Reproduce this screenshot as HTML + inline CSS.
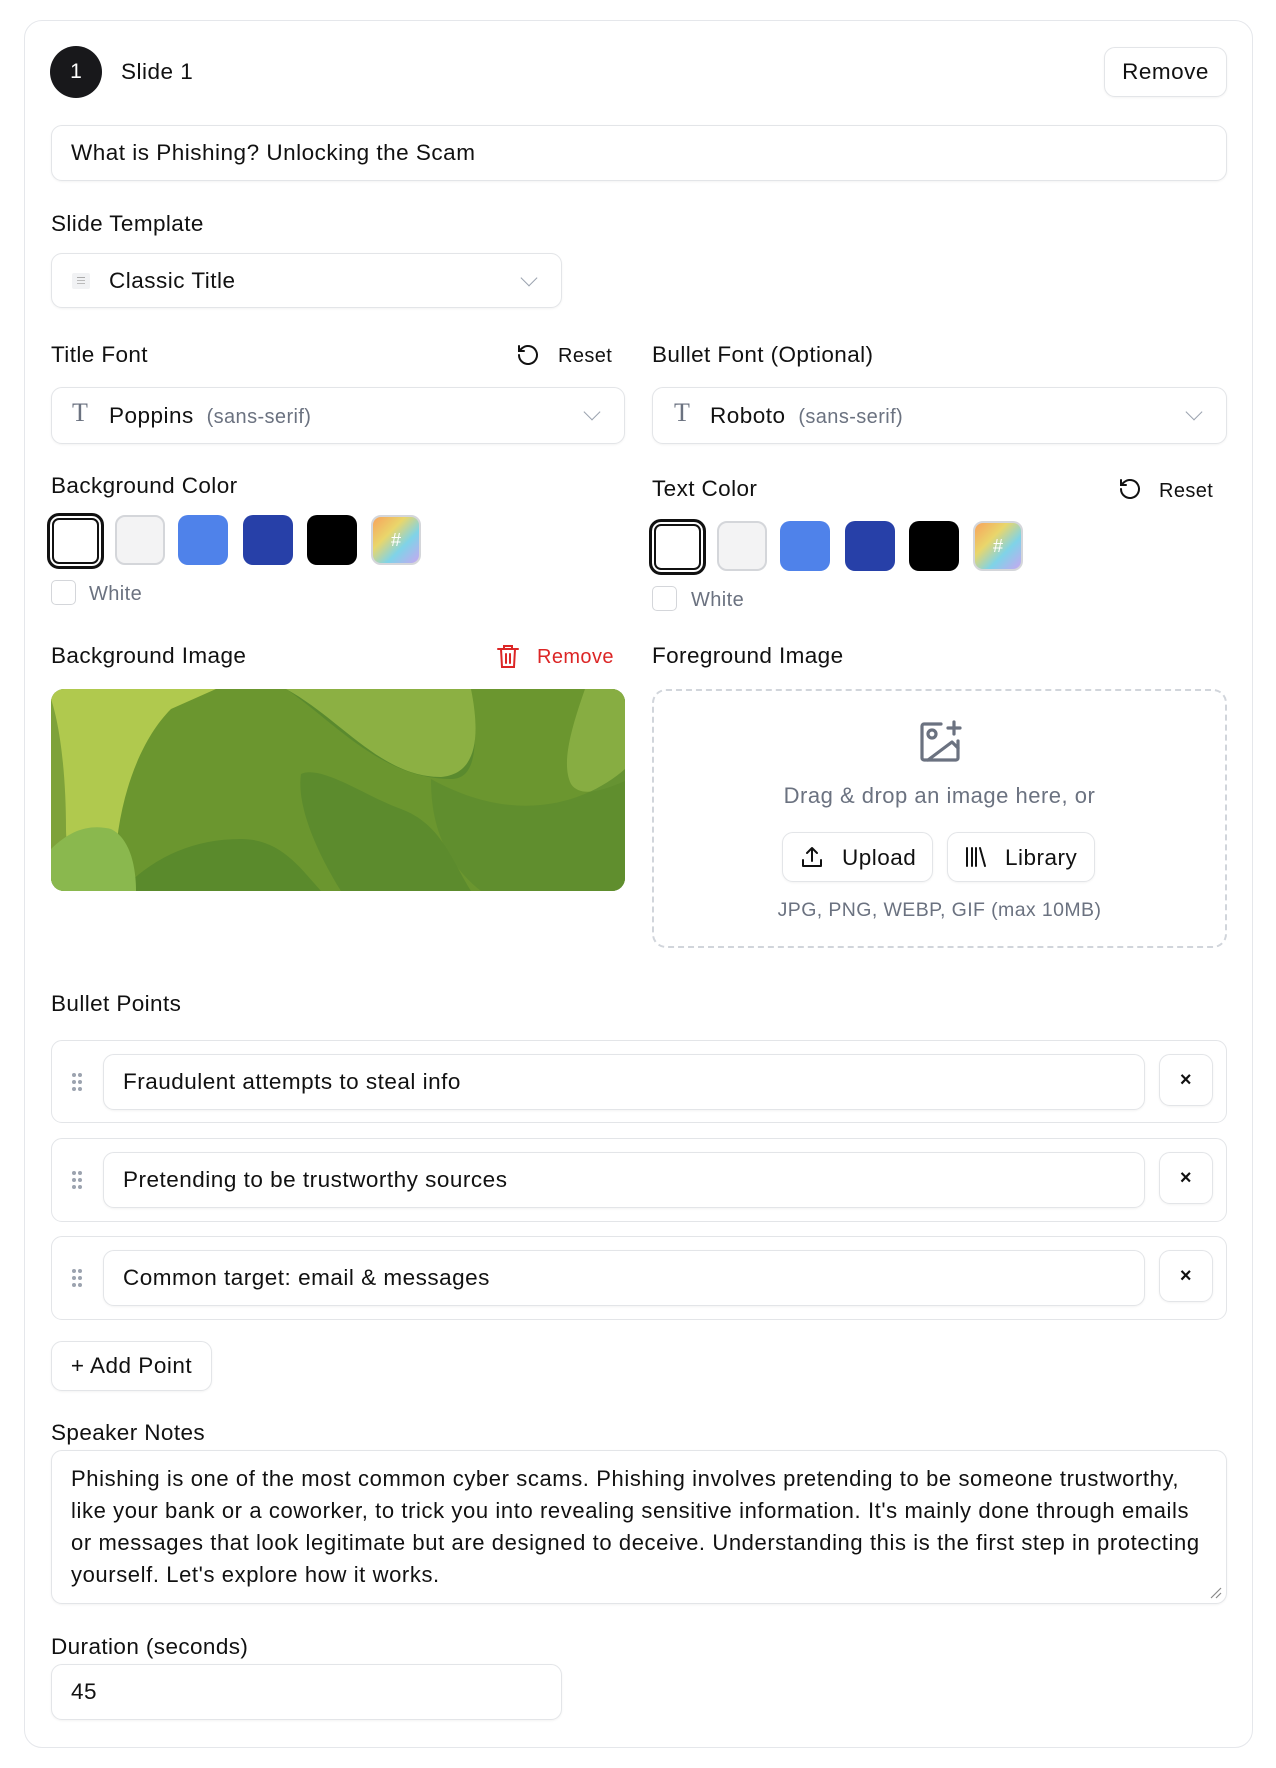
<!DOCTYPE html>
<html><head><meta charset="utf-8"><style>
*{box-sizing:border-box;margin:0;padding:0}
body{width:1276px;height:1768px;background:#fff;font-family:"Liberation Sans",sans-serif;color:#111;position:relative;overflow:hidden}
.a{position:absolute}
.card{left:24px;top:20px;width:1229px;height:1728px;border:1px solid #e5e7eb;border-radius:18px}
.box{position:absolute;border:1px solid #e3e5e8;border-radius:11px;background:#fff;box-shadow:0 1px 2px rgba(0,0,0,.05)}
.lbl{position:absolute;font-size:22.5px;line-height:24px;color:#111;letter-spacing:.4px;white-space:nowrap}
.t{position:absolute;font-size:22.5px;line-height:24px;white-space:nowrap;letter-spacing:.5px}
.s{font-size:20px;letter-spacing:.4px}
.sw{position:absolute;width:50px;height:50px;border-radius:10px}
.gray{color:#6b7280}
.chev{position:absolute;width:12px;height:12px;border-right:1.6px solid #9ca3af;border-bottom:1.6px solid #9ca3af;transform:rotate(45deg)}
.dots{position:absolute;width:10px;height:18px}
.dots i{position:absolute;width:4px;height:4px;border-radius:50%;background:#9ca3af}
</style></head><body>
<div class="a card"></div>

<div class="a" style="left:50px;top:46px;width:52px;height:52px;border-radius:50%;background:#18181b;color:#fff;font-size:21px;line-height:52px;text-align:center">1</div>
<div class="t" style="left:121px;top:60px">Slide 1</div>
<div class="box" style="left:1104px;top:47px;width:123px;height:50px"></div>
<div class="t" style="left:1104px;width:123px;text-align:center;top:60px">Remove</div>

<div class="box" style="left:51px;top:125px;width:1176px;height:56px"></div>
<div class="t" style="left:71px;top:141px">What is Phishing? Unlocking the Scam</div>

<div class="lbl" style="left:51px;top:212px">Slide Template</div>
<div class="box" style="left:51px;top:253px;width:511px;height:55px"></div>
<div class="a" style="left:72px;top:273px;width:18px;height:16px;background:#f1f2f4;border-radius:2px"></div>
<div class="a" style="left:77px;top:277px;width:8px;height:1px;background:#aaa;box-shadow:0 3px 0 #bbb,0 6px 0 #bbb"></div>
<div class="t" style="left:109px;top:269px">Classic Title</div>
<div class="chev" style="left:523px;top:272px"></div>

<div class="lbl" style="left:51px;top:343px">Title Font</div>
<svg class="a" style="left:516px;top:343px" width="24" height="24" viewBox="0 0 24 24" fill="none" stroke="#111" stroke-width="2" stroke-linecap="round"><path d="M3 12a9 9 0 1 0 3-6.7L3 8"/><path d="M3 3v5h5"/></svg>
<div class="t s" style="left:558px;top:344px">Reset</div>
<div class="lbl" style="left:652px;top:343px">Bullet Font (Optional)</div>

<div class="box" style="left:51px;top:387px;width:574px;height:57px"></div>
<div class="t" style="left:72px;top:401px;font-size:26px;color:#6b7280;font-family:'Liberation Serif',serif">T</div>
<div class="t" style="left:109px;top:404px">Poppins <span class="gray s" style="margin-left:6px">(sans-serif)</span></div>
<div class="chev" style="left:586px;top:406px"></div>
<div class="box" style="left:652px;top:387px;width:575px;height:57px"></div>
<div class="t" style="left:674px;top:401px;font-size:26px;color:#6b7280;font-family:'Liberation Serif',serif">T</div>
<div class="t" style="left:710px;top:404px">Roboto <span class="gray s" style="margin-left:6px">(sans-serif)</span></div>
<div class="chev" style="left:1188px;top:406px"></div>

<div class="lbl" style="left:51px;top:474px">Background Color</div>
<div class="sw" style="left:47px;top:513px;width:57px;height:56px;border:3px solid #111;box-shadow:inset 0 0 0 2px #fff,inset 0 0 0 4px #111;border-radius:12px;background:#fff"></div>
<div class="sw" style="left:115px;top:515px;background:#f3f3f4;border:2px solid #d4d6da"></div>
<div class="sw" style="left:178px;top:515px;background:#4f82ea"></div>
<div class="sw" style="left:243px;top:515px;background:#2740a8"></div>
<div class="sw" style="left:307px;top:515px;background:#000"></div>
<div class="sw" style="left:371px;top:515px;border:2px solid #d4d6da;background:linear-gradient(135deg,#f7a35c,#e9d66b 35%,#7fd3e8 65%,#c7a6f0);color:#fff;text-align:center;line-height:46px;font-size:18px">#</div>
<div class="a" style="left:51px;top:580px;width:25px;height:25px;border:1px solid #d4d6da;border-radius:5px"></div>
<div class="t gray s" style="left:89px;top:582px">White</div>

<div class="lbl" style="left:652px;top:477px">Text Color</div>
<svg class="a" style="left:1118px;top:477px" width="24" height="24" viewBox="0 0 24 24" fill="none" stroke="#111" stroke-width="2" stroke-linecap="round"><path d="M3 12a9 9 0 1 0 3-6.7L3 8"/><path d="M3 3v5h5"/></svg>
<div class="t s" style="left:1159px;top:479px">Reset</div>
<div class="sw" style="left:649px;top:519px;width:57px;height:56px;border:3px solid #111;box-shadow:inset 0 0 0 2px #fff,inset 0 0 0 4px #111;border-radius:12px;background:#fff"></div>
<div class="sw" style="left:717px;top:521px;background:#f3f3f4;border:2px solid #d4d6da"></div>
<div class="sw" style="left:780px;top:521px;background:#4f82ea"></div>
<div class="sw" style="left:845px;top:521px;background:#2740a8"></div>
<div class="sw" style="left:909px;top:521px;background:#000"></div>
<div class="sw" style="left:973px;top:521px;border:2px solid #d4d6da;background:linear-gradient(135deg,#f7a35c,#e9d66b 35%,#7fd3e8 65%,#c7a6f0);color:#fff;text-align:center;line-height:46px;font-size:18px">#</div>
<div class="a" style="left:652px;top:586px;width:25px;height:25px;border:1px solid #d4d6da;border-radius:5px"></div>
<div class="t gray s" style="left:691px;top:588px">White</div>

<div class="lbl" style="left:51px;top:644px">Background Image</div>
<svg class="a" style="left:496px;top:643px" width="24" height="26" viewBox="0 0 24 26" fill="none" stroke="#dc2626" stroke-width="2" stroke-linecap="round"><path d="M2 6h20M8 6V3h8v3M5 6l1 18h12l1-18M10 11v9M14 11v9"/></svg>
<div class="t s" style="left:537px;top:645px;color:#dc2626">Remove</div>
<div class="lbl" style="left:652px;top:644px">Foreground Image</div>

<svg class="a" style="left:51px;top:689px;border-radius:13px" width="574" height="202" viewBox="0 0 574 202">
<rect width="574" height="202" fill="#5a8a2e"/>
<path d="M0 0H165C130 30 95 80 80 150L0 180Z" fill="#b0c94e"/>
<path d="M0 10C10 40 15 90 15 140C15 180 40 202 80 202H0Z" fill="#7ea23a"/>
<path d="M165 0H235C280 30 330 90 400 90C420 90 430 70 420 0H574V202H65C60 140 80 60 120 20Z" fill="#6b962f"/>
<path d="M235 0H420C430 50 425 85 390 88C330 88 290 30 235 0Z" fill="#8cb043"/>
<path d="M520 0H574V92C555 100 530 110 520 95C510 75 520 40 534 0Z" fill="#87ad42"/>
<path d="M380 90C380 130 390 170 430 202H574V80C540 110 470 140 380 90Z" fill="#5e8c2e" opacity=".8"/>
<path d="M250 85C270 75 320 110 350 120C390 135 400 170 420 202H290C270 170 245 120 250 85Z" fill="#5c8b2d"/>
<path d="M70 202C100 170 140 150 190 150C230 150 250 180 270 202Z" fill="#5a8a2c"/>
<path d="M0 160C20 140 40 135 60 140C80 150 85 180 85 202H0Z" fill="#8ab84e"/>
</svg>

<div class="a" style="left:652px;top:689px;width:575px;height:259px;border:2.5px dashed #d1d5db;border-radius:14px"></div>
<svg class="a" style="left:916px;top:718px" width="48" height="48" viewBox="0 0 24 24" fill="none" stroke="#6b7280" stroke-width="1.6" stroke-linecap="round" stroke-linejoin="round"><path d="M16 5h6M19 2v6"/><path d="M21 11.5V20a1 1 0 0 1-1 1H4a1 1 0 0 1-1-1V4a1 1 0 0 1 1-1h8.5"/><path d="M21 15l-3-3L6 21"/><circle cx="8" cy="8" r="2"/></svg>
<div class="t gray" style="left:652px;width:575px;text-align:center;top:784px;font-size:22px;letter-spacing:.5px">Drag &amp; drop an image here, or</div>
<div class="box" style="left:782px;top:832px;width:151px;height:50px"></div>
<svg class="a" style="left:800px;top:845px" width="24" height="24" viewBox="0 0 24 24" fill="none" stroke="#111" stroke-width="2" stroke-linecap="round" stroke-linejoin="round"><path d="M3 15v6h18v-6M12 16V3M7 8l5-5 5 5"/></svg>
<div class="t" style="left:842px;top:846px">Upload</div>
<div class="box" style="left:947px;top:832px;width:148px;height:50px"></div>
<svg class="a" style="left:964px;top:846px" width="24" height="22" viewBox="0 0 24 22" fill="none" stroke="#111" stroke-width="2" stroke-linecap="round"><path d="M3 2v18M8 2v18M12 2v18M16 2l5 18"/></svg>
<div class="t" style="left:1005px;top:846px">Library</div>
<div class="t gray" style="left:652px;width:575px;text-align:center;top:898px;font-size:19.5px;letter-spacing:.4px">JPG, PNG, WEBP, GIF (max 10MB)</div>

<div class="lbl" style="left:51px;top:992px">Bullet Points</div>

<div class="box" style="left:51px;top:1040px;width:1176px;height:83px;box-shadow:none"></div>
<div class="box" style="left:103px;top:1054px;width:1042px;height:56px"></div>
<div class="t" style="left:123px;top:1070px">Fraudulent attempts to steal info</div>
<div class="box" style="left:1159px;top:1054px;width:54px;height:52px"></div>
<div class="t" style="left:1159px;width:54px;text-align:center;top:1068px;font-size:20px;font-weight:bold">×</div>

<div class="box" style="left:51px;top:1138px;width:1176px;height:84px;box-shadow:none"></div>
<div class="box" style="left:103px;top:1152px;width:1042px;height:56px"></div>
<div class="t" style="left:123px;top:1168px">Pretending to be trustworthy sources</div>
<div class="box" style="left:1159px;top:1152px;width:54px;height:52px"></div>
<div class="t" style="left:1159px;width:54px;text-align:center;top:1166px;font-size:20px;font-weight:bold">×</div>

<div class="box" style="left:51px;top:1236px;width:1176px;height:84px;box-shadow:none"></div>
<div class="box" style="left:103px;top:1250px;width:1042px;height:56px"></div>
<div class="t" style="left:123px;top:1266px">Common target: email &amp; messages</div>
<div class="box" style="left:1159px;top:1250px;width:54px;height:52px"></div>
<div class="t" style="left:1159px;width:54px;text-align:center;top:1264px;font-size:20px;font-weight:bold">×</div>

<div class="dots" style="left:72px;top:1073px"><i style="left:0;top:0"></i><i style="left:6px;top:0"></i><i style="left:0;top:7px"></i><i style="left:6px;top:7px"></i><i style="left:0;top:14px"></i><i style="left:6px;top:14px"></i></div>
<div class="dots" style="left:72px;top:1171px"><i style="left:0;top:0"></i><i style="left:6px;top:0"></i><i style="left:0;top:7px"></i><i style="left:6px;top:7px"></i><i style="left:0;top:14px"></i><i style="left:6px;top:14px"></i></div>
<div class="dots" style="left:72px;top:1269px"><i style="left:0;top:0"></i><i style="left:6px;top:0"></i><i style="left:0;top:7px"></i><i style="left:6px;top:7px"></i><i style="left:0;top:14px"></i><i style="left:6px;top:14px"></i></div>

<div class="box" style="left:51px;top:1341px;width:161px;height:50px"></div>
<div class="t" style="left:51px;width:161px;text-align:center;top:1354px">+ Add Point</div>

<div class="lbl" style="left:51px;top:1421px">Speaker Notes</div>
<div class="box" style="left:51px;top:1450px;width:1176px;height:154px"></div>
<div class="a" style="left:71px;top:1463px;font-size:22px;letter-spacing:.6px;line-height:32px;white-space:nowrap">Phishing is one of the most common cyber scams. Phishing involves pretending to be someone trustworthy,<br>like your bank or a coworker, to trick you into revealing sensitive information. It's mainly done through emails<br>or messages that look legitimate but are designed to deceive. Understanding this is the first step in protecting<br>yourself. Let's explore how it works.</div>
<svg class="a" style="left:1210px;top:1587px" width="12" height="12" viewBox="0 0 12 12" stroke="#888" stroke-width="1.2"><path d="M11 1L1 11M11 6L6 11"/></svg>

<div class="lbl" style="left:51px;top:1635px">Duration (seconds)</div>
<div class="box" style="left:51px;top:1664px;width:511px;height:56px"></div>
<div class="t" style="left:71px;top:1680px">45</div>
</body></html>
